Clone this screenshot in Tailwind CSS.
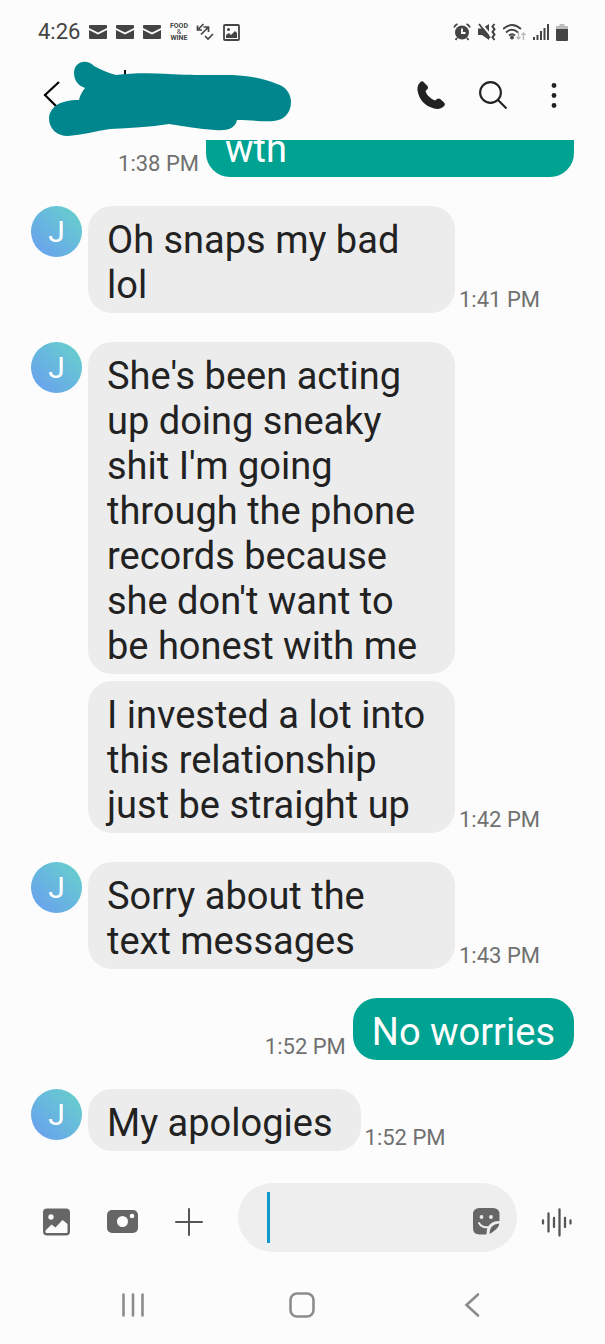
<!DOCTYPE html>
<html lang="en">
<head>
    <meta charset="UTF-8">
    <meta name="viewport" content="width=device-width, initial-scale=1.0">
    <title>Messages</title>
    <script src="https://cdn.jsdelivr.net/npm/@tailwindcss/browser@4"></script>
</head>
<body class="bg-[#fcfcfc] font-[Roboto,sans-serif] text-[#222]">
    <div class="relative flex flex-col h-screen overflow-hidden">

        <!-- Status bar -->
        <div class="flex justify-between items-center h-16 shrink-0 pl-[38px] pr-[37px] text-[#444]">
            <div class="flex items-center gap-[9px]">
                <span class="text-[22px] leading-6">4:26</span>
                <svg class="w-[18px] h-[14px]" viewBox="0 0 18 14" fill="#444"><path d="M1 0h16q1 0 1 1v2L9 7.500 0 3V1q0-1 1-1zM0 5l9 4.500L18 5v8q0 1-1 1H1q-1 0-1-1z"/></svg>
                <svg class="w-[18px] h-[14px]" viewBox="0 0 18 14" fill="#444"><path d="M1 0h16q1 0 1 1v2L9 7.500 0 3V1q0-1 1-1zM0 5l9 4.500L18 5v8q0 1-1 1H1q-1 0-1-1z"/></svg>
                <svg class="w-[18px] h-[14px]" viewBox="0 0 18 14" fill="#444"><path d="M1 0h16q1 0 1 1v2L9 7.500 0 3V1q0-1 1-1zM0 5l9 4.500L18 5v8q0 1-1 1H1q-1 0-1-1z"/></svg>
                <span class="flex flex-col items-center w-[17px] font-bold text-[7px] leading-[6px]"><span>FOOD</span><span class="font-normal">&amp;</span><span>WINE</span></span>
                <svg class="w-[18px] h-[18px]" viewBox="0 0 18 18" fill="none" stroke="#444" stroke-width="1.700"><path d="M7.500 1L2 6.500M1.500 2.500v4.500h4.500M5 11.500l7-7M7.500 4H12.500V9M9 13l3 3 5-5"/></svg>
                <svg class="w-[17px] h-[17px]" viewBox="0 0 17 17"><rect x="1" y="1" width="15" height="15" rx="1" fill="none" stroke="#444" stroke-width="1.800"/><circle cx="5.500" cy="5.500" r="1.500" fill="#444"/><path d="M3 14v-3l3-2 2 2 4-4 2 2v5z" fill="#444"/></svg>
            </div>
            <div class="flex items-center gap-[7px]">
                <svg class="w-[18px] h-[18px]" viewBox="0 0 18 18"><circle cx="9" cy="9.500" r="7" fill="#444"/><path d="M1 4.500Q2 2 4.500 1M17 4.500Q16 2 13.500 1M4 15l-1.500 2M14 15l1.500 2" stroke="#444" stroke-width="1.800" fill="none"/><path d="M9 5.500v4.500h3.500" stroke="#fff" stroke-width="1.800" fill="none"/></svg>
                <svg class="w-[18px] h-[18px]" viewBox="0 0 18 18"><path d="M0 5.500h4l7-4.500v16l-7-5H0z" fill="#444"/><path d="M2.500 0l10 12" stroke="#fcfcfc" stroke-width="2"/><path d="M1 1l11 14" stroke="#444" stroke-width="1.800"/><path d="M16.500 1l-2 2.500 2 2.700-2 2.700 2 2.700-2 2.700 2 2.700" fill="none" stroke="#444" stroke-width="2"/></svg>
                <svg class="w-[23px] h-[18px]" viewBox="0 0 23 18" fill="none" stroke="#444" stroke-width="1.900"><path d="M0 6q9-8 18 0M3 9.500q6-5.500 12 0M6 12.500q3-2.500 6 0"/><circle cx="9" cy="14.500" r="1" fill="#444"/><path d="M15.500 9v7M13.500 14l2 2 2-2M20.500 17v-7M18.500 12l2-2 2 2" stroke="#bbb" stroke-width="1.400"/></svg>
                <svg class="w-[16px] h-[16px]" viewBox="0 0 16 16" stroke="#444" stroke-width="2"><path d="M1 16v-3M4.500 16v-5M8 16V7M11.500 16V4M15 16V0"/></svg>
                <svg class="w-[12px] h-[17px]" viewBox="0 0 12 17"><path d="M3.500 0h5v2H12v4H0V2h3.500z" fill="#bbb"/><path d="M0 5h12v11q0 1-1 1H1q-1 0-1-1z" fill="#444"/></svg>
            </div>
        </div>

        <!-- Conversation header -->
        <header class="flex justify-between items-center shrink-0 pt-[17px] pb-[31px] pl-[43px] pr-9">
            <button type="button" aria-label="Back">
                <svg class="w-[18px] h-7" viewBox="0 0 18 28" fill="none" stroke="#000" stroke-width="2.200"><path d="M16 1L2 14l13 13"/></svg>
            </button>
            <div class="flex items-center gap-[34px]">
                <button type="button" aria-label="Call">
                    <svg class="w-7 h-7" viewBox="0 0 28 28" fill="#222"><path d="M3.500 1Q5.500-.5 7 1.500L10.500 5Q11.500 6.500 10.500 8L8.500 10Q10 16 18 19.500L20.500 17.800Q22 17 23.500 18.200L27 21.500Q28.500 23 27.500 24.500 24 29 17 27.500 3 23.500.5 9.500 0 4 3.500 1z"/></svg>
                </button>
                <button type="button" aria-label="Search">
                    <svg class="w-7 h-7" viewBox="0 0 28 28" fill="none" stroke="#222" stroke-width="2.100"><circle cx="11.500" cy="11.500" r="10.400"/><path d="M19 19l8.500 8.500"/></svg>
                </button>
                <button type="button" aria-label="More options">
                    <svg class="w-7 h-7" viewBox="0 0 28 28" fill="#222"><circle cx="13" cy="4.500" r="2.400"/><circle cx="13" cy="14.500" r="2.400"/><circle cx="13" cy="24.500" r="2.400"/></svg>
                </button>
            </div>
        </header>

        <!-- Marker over the contact name -->
        <svg class="absolute left-[48px] top-[58px] w-[246px] h-[80px]" viewBox="0 0 246 80" aria-hidden="true">
            <path d="M77 12v8" stroke="#111" stroke-width="2"/>
            <path fill="#00868c" d="M46 8C38 0 26 4 26 15c0 8 5 13 11 15-3 4-5 7-6 12C10 42 2 50 1 60c0 11 8 18 19 18 14-1 28-5 42-7 20-1 40-2 59-5 15 2 30 5 46 6 12 1 20-1 22-10 15 0 26 2 37 1 10-1 17-8 17-19 0-9-6-16-14-18-14-6-28-8-44-9-32 0-50 0-64-1C102 15 84 15 68 17 60 15 52 11 46 8z"/>
        </svg>

        <!-- Messages -->
        <main class="flex-1 min-h-0 overflow-hidden flex flex-col justify-end gap-[29px] px-[31px] pb-[29px] text-[38px] leading-[45px]">
            <div class="flex justify-end items-end gap-[7px] shrink-0">
                <time class="text-[22px] leading-[26px] text-[#707070]">1:38 PM</time>
                <p class="w-[368px] bg-[#00a292] text-white rounded-3xl px-[19px] pt-3 pb-[5px]">wth</p>
            </div>

            <div class="flex items-end gap-1 shrink-0">
                <div class="flex items-start gap-[6px]">
                    <span class="flex justify-center items-center shrink-0 w-[51px] h-[51px] rounded-full bg-linear-to-tr from-[#6a9cf0] to-[#66d2c8] text-white text-[30px] leading-8">J</span>
                    <p class="max-w-[367px] bg-[#ececec] rounded-3xl px-[19px] pt-3 pb-[5px]">Oh snaps my bad lol</p>
                </div>
                <time class="shrink-0 text-[22px] leading-[26px] text-[#707070]">1:41 PM</time>
            </div>

            <div class="flex items-end gap-1 shrink-0">
                <div class="flex items-start gap-[6px]">
                    <span class="flex justify-center items-center shrink-0 w-[51px] h-[51px] rounded-full bg-linear-to-tr from-[#6a9cf0] to-[#66d2c8] text-white text-[30px] leading-8">J</span>
                    <div class="flex flex-col gap-[7px] max-w-[367px]">
                        <p class="bg-[#ececec] rounded-3xl px-[19px] pt-3 pb-[5px]">She's been acting up doing sneaky shit I'm going through the phone records because she don't want to be honest with me</p>
                        <p class="bg-[#ececec] rounded-3xl px-[19px] pt-3 pb-[5px]">I invested a lot into this relationship just be straight up</p>
                    </div>
                </div>
                <time class="shrink-0 text-[22px] leading-[26px] text-[#707070]">1:42 PM</time>
            </div>

            <div class="flex items-end gap-1 shrink-0">
                <div class="flex items-start gap-[6px]">
                    <span class="flex justify-center items-center shrink-0 w-[51px] h-[51px] rounded-full bg-linear-to-tr from-[#6a9cf0] to-[#66d2c8] text-white text-[30px] leading-8">J</span>
                    <p class="max-w-[367px] bg-[#ececec] rounded-3xl px-[19px] pt-3 pb-[5px]">Sorry about the text messages</p>
                </div>
                <time class="shrink-0 text-[22px] leading-[26px] text-[#707070]">1:43 PM</time>
            </div>

            <div class="flex justify-end items-end gap-[7px] shrink-0">
                <time class="text-[22px] leading-[26px] text-[#707070]">1:52 PM</time>
                <p class="max-w-[368px] bg-[#00a292] text-white rounded-3xl px-[19px] pt-3 pb-[5px]">No worries</p>
            </div>

            <div class="flex items-end gap-1 shrink-0">
                <div class="flex items-start gap-[6px]">
                    <span class="flex justify-center items-center shrink-0 w-[51px] h-[51px] rounded-full bg-linear-to-tr from-[#6a9cf0] to-[#66d2c8] text-white text-[30px] leading-8">J</span>
                    <p class="max-w-[367px] bg-[#ececec] rounded-3xl pl-[19px] pr-7 pt-3 pb-[5px]">My apologies</p>
                </div>
                <time class="shrink-0 text-[22px] leading-[26px] text-[#707070]">1:52 PM</time>
            </div>
        </main>

        <!-- Composer -->
        <form class="flex items-center shrink-0 pt-[3px] pl-10 pr-8">
            <div class="flex items-center gap-[34px] mr-[34px] pt-2">
                <button type="button" aria-label="Gallery">
                    <svg class="w-8 h-8" viewBox="0 0 32 32"><rect x="3" y="2.500" width="27" height="27" rx="4" fill="#666"/><circle cx="11" cy="11" r="2.700" fill="#fcfcfc"/><path d="M5.500 24.500L11.500 18.500l4 3L22.500 14l5 4v8q0 1-1 1H6.500q-1 0-1-1z" fill="#fcfcfc"/></svg>
                </button>
                <button type="button" aria-label="Camera">
                    <svg class="w-8 h-8" viewBox="0 0 32 32"><rect x="1" y="4" width="31" height="23" rx="5" fill="#666"/><circle cx="16.500" cy="15.500" r="5.500" fill="#fcfcfc"/><circle cx="26" cy="10" r="2.300" fill="#fcfcfc"/></svg>
                </button>
                <button type="button" aria-label="More">
                    <svg class="w-8 h-8" viewBox="0 0 32 32" stroke="#555" stroke-width="2" stroke-linecap="round"><path d="M17 3v26M4 16h26"/></svg>
                </button>
            </div>
            <div class="relative flex-1 min-w-0">
                <input type="text" aria-label="Message" class="block w-full h-[69px] rounded-full bg-[#eee] pl-[30px] pr-16 text-[38px] outline-none">
                <span class="absolute left-[29px] top-[9px] w-[3px] h-[51px] bg-[#0e9bcb]"></span>
                <button type="button" aria-label="Stickers" class="absolute right-[14px] top-[22px]">
                    <svg class="w-8 h-8" viewBox="0 0 32 32"><path d="M8.500 3h13.500q6.500 0 6.500 6.500V16q-13 0-13 13.500H8.500Q2 29.500 2 23V9.500Q2 3 8.500 3z" fill="#666"/><path d="M18.500 29q0-9.500 9.500-10.500L28 20q-1 4-9.500 9z" fill="#666"/><circle cx="10.500" cy="12" r="1.900" fill="#eee"/><circle cx="20" cy="12" r="1.900" fill="#eee"/><path d="M8 18q3 5 8.500 4.200" fill="none" stroke="#eee" stroke-width="2" stroke-linecap="round"/></svg>
                </button>
            </div>
            <button type="button" aria-label="Voice message" class="ml-6 pt-2">
                <svg class="w-8 h-8" viewBox="0 0 32 32" stroke="#555" stroke-width="2.300" stroke-linecap="round"><path d="M2 14.500v3M7.500 7.500v18M13 12v9M18.500 3.500v26M24 12v9M29.500 14.500v3"/></svg>
            </button>
        </form>

        <!-- Navigation bar -->
        <nav class="grid grid-cols-3 justify-items-center shrink-0 px-12 pt-[39px] pb-[25px]">
            <button type="button" aria-label="Recent apps">
                <svg class="w-7 h-7" viewBox="0 0 28 28" stroke="#8c8c8c" stroke-width="2.600" stroke-linecap="round"><path d="M4.500 3.500v21M14 3.500v21M23.500 3.500v21"/></svg>
            </button>
            <button type="button" aria-label="Home">
                <svg class="w-7 h-7" viewBox="0 0 28 28" fill="none" stroke="#8c8c8c" stroke-width="2.600"><rect x="2.500" y="2.500" width="23" height="23" rx="6.500"/></svg>
            </button>
            <button type="button" aria-label="Navigate back">
                <svg class="w-7 h-7" viewBox="0 0 28 28" fill="none" stroke="#8c8c8c" stroke-width="2.600" stroke-linecap="round"><path d="M20 3.500L8.500 14 20 24.500"/></svg>
            </button>
        </nav>
    </div>
</body>
</html>
